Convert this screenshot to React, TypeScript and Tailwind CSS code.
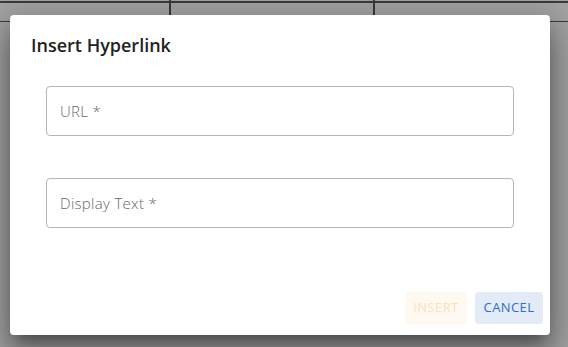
export default function App() {
  return (
    <div
      className="relative w-[568px] h-[347px] overflow-hidden bg-[#a3a3a3]"
      style={{ fontFamily: '"Open Sans", "Noto Sans", sans-serif' }}
    >
      {/* table behind the backdrop */}
      <div className="absolute left-0 right-0 top-[1px] h-[2px] bg-[#3a3a3a]" />
      <div className="absolute left-0 right-0 top-[21px] h-[1px] bg-[#3a3a3a]" />
      <div className="absolute top-0 h-[22px] left-[169px] w-[2px] bg-[#3a3a3a]" />
      <div className="absolute top-0 h-[22px] left-[373px] w-[2px] bg-[#3a3a3a]" />

      {/* Dialog */}
      <div className="absolute left-[10px] top-[15px] w-[540px] h-[320px] bg-white rounded-[4px] shadow-[0_10px_14px_-6px_rgba(0,0,0,0.35),0_20px_30px_3px_rgba(0,0,0,0.22),0_8px_36px_7px_rgba(0,0,0,0.18)] flex flex-col">
        <h2 className="pl-[21px] pt-[17px] text-[18px] leading-[26px] font-semibold text-[#222]">
          Insert Hyperlink
        </h2>

        <div className="px-[36px] pt-[28px] flex flex-col gap-[42px]">
          <div className="h-[50px] rounded-[4px] border border-[#b5b5b5] flex items-center px-[13px]">
            <span className="text-[15px] tracking-[0.3px] font-light text-[#666]">URL *</span>
          </div>
          <div className="h-[50px] rounded-[4px] border border-[#b5b5b5] flex items-center px-[13px]">
            <span className="text-[15px] tracking-[0.3px] font-light text-[#666]">Display Text *</span>
          </div>
        </div>

        <div className="mt-auto flex justify-end gap-[8px] pr-[7px] pb-[11px]">
          <button className="w-[62px] h-[32px] rounded-[4px] bg-[#fff9f1] text-[#ffe1b8] text-[13px] tracking-[0.4px]">
            INSERT
          </button>
          <button className="w-[68px] h-[32px] rounded-[4px] bg-[#e3ebf7] text-[#2a6fc9] text-[13px] tracking-[0.4px]">
            CANCEL
          </button>
        </div>
      </div>
    </div>
  );
}
